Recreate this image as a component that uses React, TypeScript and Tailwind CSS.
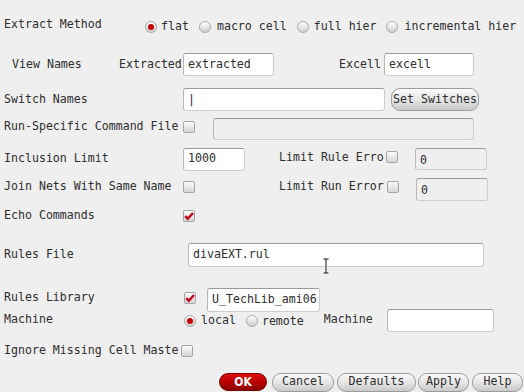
import type { ReactNode } from "react";

function Radio({ on }: { on?: boolean }) {
  return (
    <span className="relative w-[12px] h-[12px] shrink-0 rounded-full border border-[#a9a9a9] bg-gradient-to-b from-[#ffffff] to-[#cfcfcf] flex items-center justify-center">
      {on && <span className="w-[6px] h-[6px] rounded-full bg-[#c40000]" />}
    </span>
  );
}

function Check({ on }: { on?: boolean }) {
  return (
    <span className="relative block w-[12px] h-[12px] shrink-0 rounded-[2px] border border-[#a4a4a4] bg-gradient-to-b from-[#fbfbfb] to-[#d6d6d6]">
      {on && (
        <svg viewBox="0 0 12 12" className="absolute left-[-1px] top-[-1px] w-[12px] h-[12px]">
          <path d="M2.2 6.2 L4.8 8.8 L10 3" fill="none" stroke="#c8001a" strokeWidth="2.4" />
        </svg>
      )}
    </span>
  );
}

function Field({ className, value, disabled }: { className: string; value?: string; disabled?: boolean }) {
  return (
    <div
      className={`${className} shrink-0 rounded-[3px] border border-[#cdcdcd] border-t-[#9a9a9a] border-l-[#b8b8b8] flex items-center px-[4px] overflow-hidden whitespace-nowrap ${
        disabled ? "bg-[#efefef]" : "bg-white"
      }`}
    >
      {value}
    </div>
  );
}

function Pill({ className, children }: { className: string; children: ReactNode }) {
  return (
    <div
      className={`${className} shrink-0 rounded-[9px] border border-[#9c9c9c] bg-gradient-to-b from-[#fafafa] via-[#e6e6e6] to-[#c9c9c9] flex items-center justify-center`}
    >
      {children}
    </div>
  );
}

export default function App() {
  return (
    <div className="relative w-[524px] h-[392px] overflow-hidden bg-[#efefef] text-[#2e2e2e] text-[11.6px] leading-none font-['DejaVu_Sans_Mono',monospace] flex flex-col pl-[4px]">
      {/* Extract Method */}
      <div className="mt-[14px] h-[22px] flex items-center">
        <span className="w-[141px]">Extract Method</span>
        <div className="flex items-center mt-[3px]">
          <Radio on />
          <span className="ml-[4px]">flat</span>
          <span className="ml-[10px]"><Radio /></span>
          <span className="ml-[6px]">macro cell</span>
          <span className="ml-[10px]"><Radio /></span>
          <span className="ml-[5px]">full hier</span>
          <span className="ml-[9px]"><Radio /></span>
          <span className="ml-[7px]">incremental hier</span>
        </div>
      </div>

      {/* View Names */}
      <div className="mt-[17px] h-[23px] flex items-center">
        <span className="w-[115px] pl-[8px]">View Names</span>
        <span className="w-[62px] overflow-hidden whitespace-nowrap mr-[2px]">Extracted</span>
        <Field className="w-[91px] h-[23px]" value="extracted" />
        <span className="ml-[65px] w-[45px]">Excell</span>
        <Field className="w-[90px] h-[23px]" value="excell" />
      </div>

      {/* Switch Names */}
      <div className="mt-[12px] h-[23px] flex items-center">
        <span className="w-[179px]">Switch Names</span>
        <Field className="w-[202px] h-[23px]" value="|" />
        <Pill className="ml-[6px] w-[88px] h-[23px]">Set Switches</Pill>
      </div>

      {/* Run-Specific Command File */}
      <div className="mt-[7px] h-[22px] flex items-center">
        <span className="w-[179px] mb-[4px]">Run-Specific Command File</span>
        <span className="mb-[4px]"><Check /></span>
        <Field className="ml-[18px] w-[261px] h-[22px]" disabled />
      </div>

      {/* Inclusion Limit */}
      <div className="mt-[8px] h-[22px] flex items-center">
        <span className="w-[179px]">Inclusion Limit</span>
        <Field className="w-[62px] h-[23px]" value="1000" />
        <span className="ml-[34px] w-[107px] whitespace-nowrap mb-[3px]">Limit Rule Erro</span>
        <span className="mb-[4px]"><Check /></span>
        <Field className="ml-[17px] w-[72px] h-[22px] pt-[3px]" value="0" disabled />
      </div>

      {/* Join Nets */}
      <div className="mt-[8px] h-[22px] flex items-center">
        <span className="w-[179px] mb-[4px]">Join Nets With Same Name</span>
        <span className="mb-[4px]"><Check /></span>
        <span className="ml-[84px] w-[108px] mb-[4px]">Limit Run Error</span>
        <span className="mb-[4px]"><Check /></span>
        <Field className="ml-[17px] w-[72px] h-[23px] pt-[3px]" value="0" disabled />
      </div>

      {/* Echo Commands */}
      <div className="mt-[5px] h-[22px] flex items-center">
        <span className="w-[179px]">Echo Commands</span>
        <Check on />
      </div>

      {/* Rules File */}
      <div className="mt-[16px] h-[23px] flex items-center">
        <span className="w-[184px]">Rules File</span>
        <Field className="w-[296px] h-[24px]" value="divaEXT.rul" />
      </div>

      {/* Rules Library */}
      <div className="mt-[22px] h-[23px] flex items-center">
        <span className="w-[180px] mb-[4px]">Rules Library</span>
        <span className="mb-[4px]"><Check on /></span>
        <Field className="ml-[11px] w-[113px] h-[24px]" value="U_TechLib_ami06" />
      </div>

      {/* Machine */}
      <div className="mt-[-2px] h-[22px] flex items-center">
        <span className="w-[180px]">Machine</span>
        <span className="mt-[2px]"><Radio on /></span>
        <span className="ml-[5px] mt-[2px]">local</span>
        <span className="ml-[10px] mt-[2px]"><Radio /></span>
        <span className="ml-[4px] mt-[4px]">remote</span>
        <span className="ml-[20px] w-[63px]">Machine</span>
        <Field className="w-[107px] h-[23px]" />
      </div>

      {/* Ignore Missing */}
      <div className="mt-[9px] h-[22px] flex items-center">
        <span className="w-[177px]">Ignore Missing Cell Maste</span>
        <Check />
      </div>

      {/* Buttons */}
      <div className="mt-[11px] h-[18px] flex items-center">
        <div className="ml-[215px] w-[48px] h-[18px] rounded-[9px] bg-gradient-to-b from-[#e01010] via-[#b80000] to-[#8a0000] border border-[#7a0000] flex items-center justify-center text-white font-bold text-[12px] font-['DejaVu_Sans_Condensed',sans-serif]">
          OK
        </div>
        <Pill className="ml-[5px] w-[62px] h-[19px]">Cancel</Pill>
        <Pill className="ml-[3px] w-[79px] h-[19px]">Defaults</Pill>
        <Pill className="ml-[2px] w-[51px] h-[19px]">Apply</Pill>
        <Pill className="ml-[3px] w-[51px] h-[19px]">Help</Pill>
      </div>

      {/* mouse I-beam cursor */}
      <svg viewBox="0 0 8 16" className="absolute left-[322px] top-[258px] w-[8px] h-[16px]">
        <path d="M1 1 H7 M4 1 V15 M1 15 H7" stroke="#ffffff" strokeWidth="2.4" fill="none" />
        <path d="M1.5 1 H6.5 M4 1 V15 M1.5 15 H6.5" stroke="#111111" strokeWidth="1" fill="none" />
      </svg>
    </div>
  );
}
